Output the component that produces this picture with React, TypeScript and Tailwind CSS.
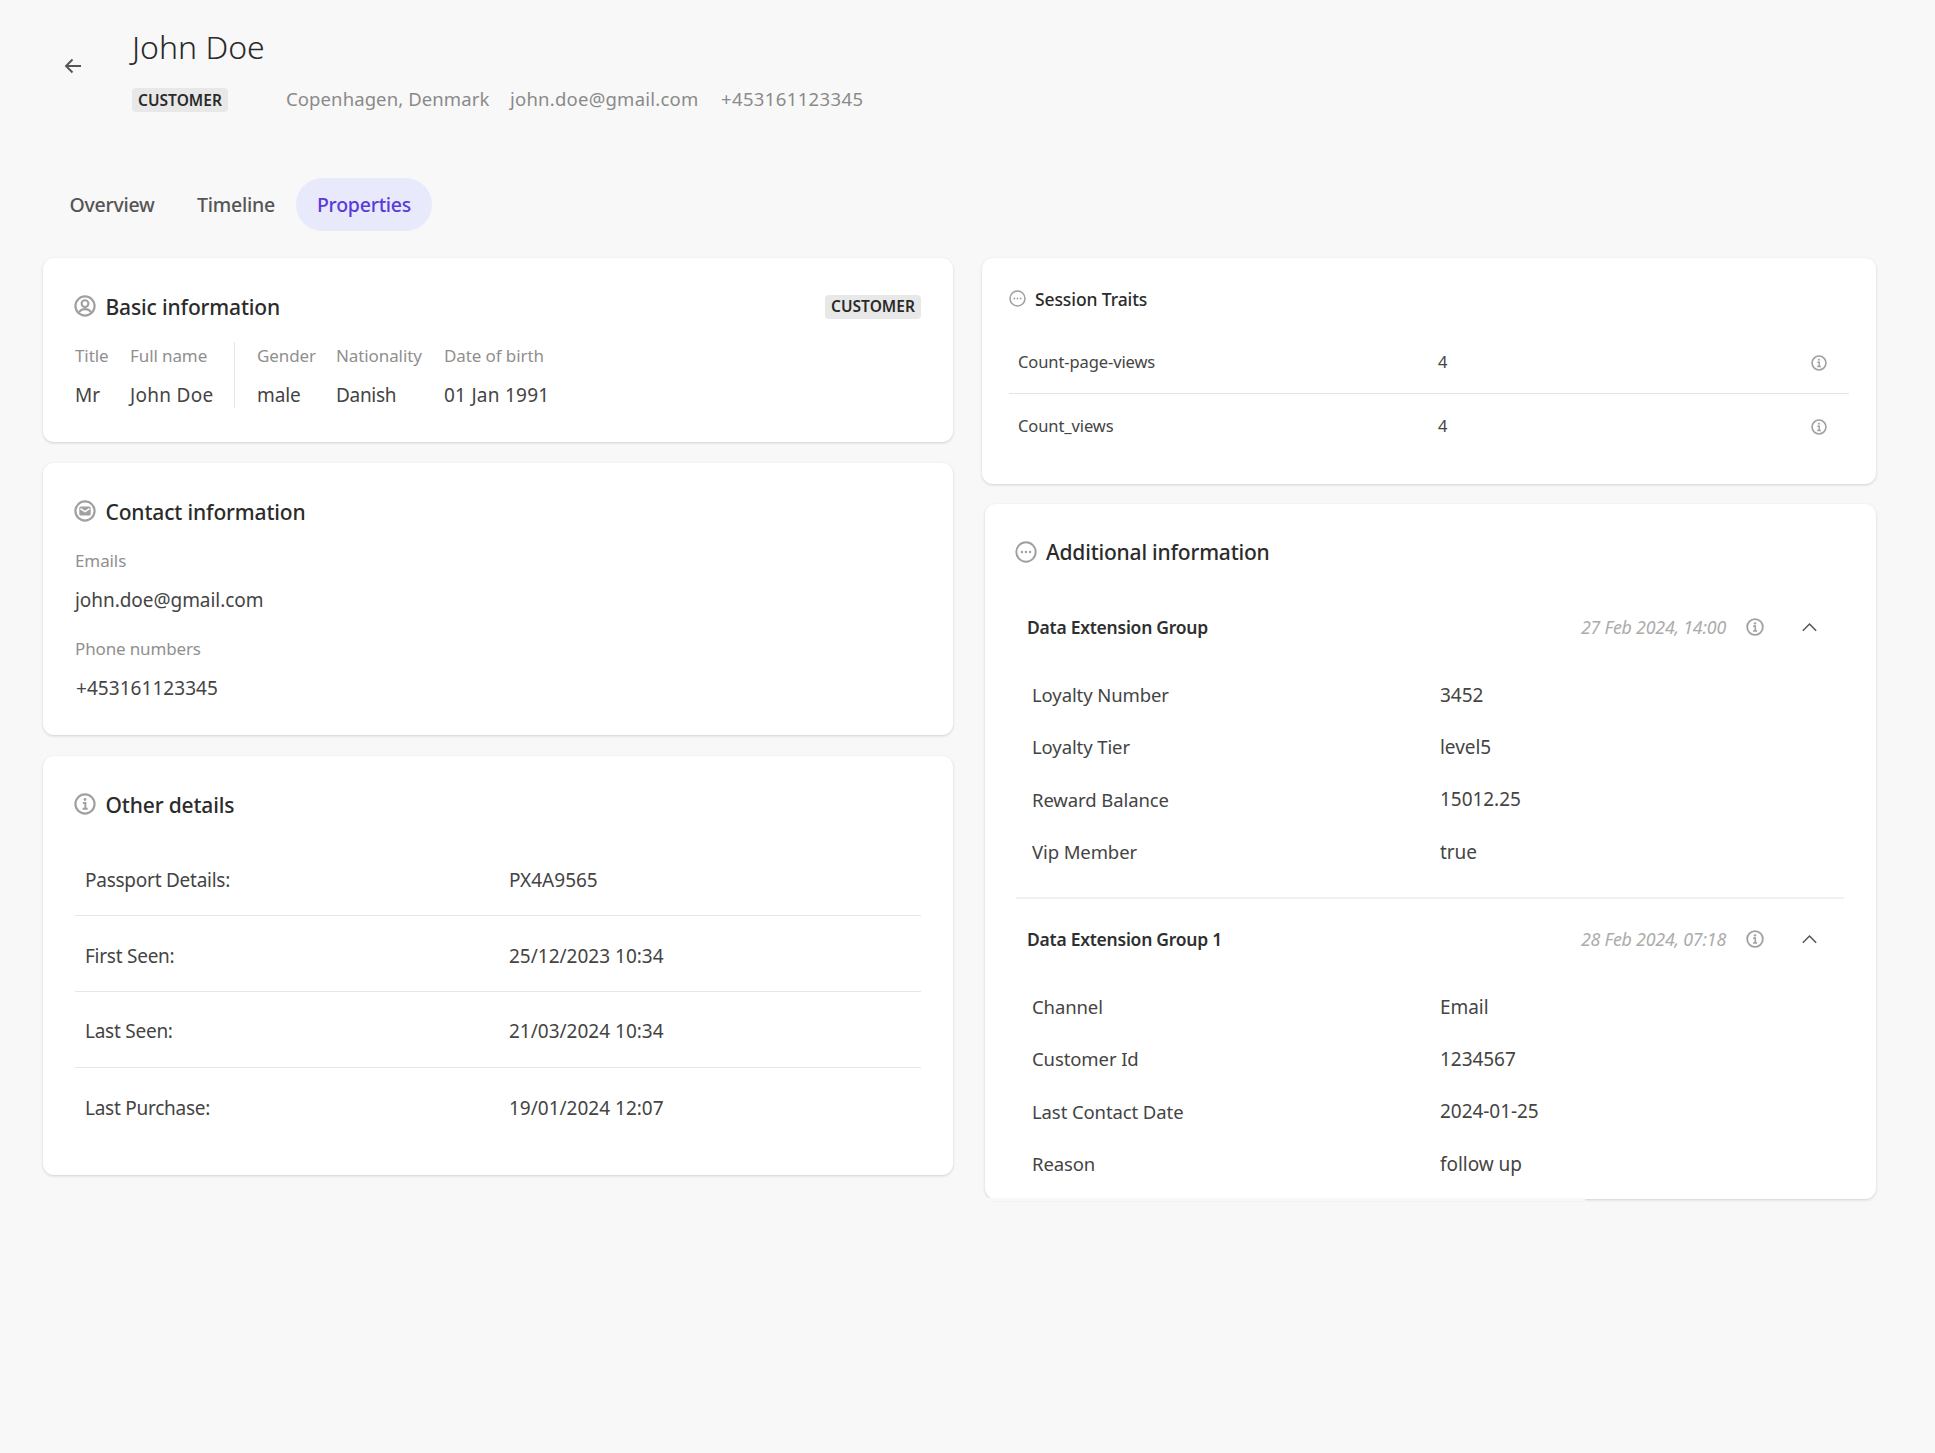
import React from "react";

const Stroke = "#a0a0a0";

function InfoIcon({ className }: { className: string }) {
  return (
    <svg viewBox="0 0 20 20" fill="none" className={className} stroke={Stroke}>
      <circle cx="10" cy="10" r="8.7" strokeWidth="2" />
      <circle cx="10" cy="5.900" r="1.300" fill={Stroke} stroke="none" />
      <path d="M8 9h2.300v5.200M7.800 14.400h4.600" strokeWidth="1.800" />
    </svg>
  );
}
function DotsIcon({ className }: { className: string }) {
  return (
    <svg viewBox="0 0 20 20" fill="none" className={className} stroke={Stroke}>
      <circle cx="10" cy="10" r="8.800" strokeWidth="1.800" />
      <circle cx="6.300" cy="10" r="1.100" fill={Stroke} stroke="none" />
      <circle cx="10" cy="10" r="1.100" fill={Stroke} stroke="none" />
      <circle cx="13.700" cy="10" r="1.100" fill={Stroke} stroke="none" />
    </svg>
  );
}
function UserIcon({ className }: { className: string }) {
  return (
    <svg viewBox="0 0 20 20" fill="none" className={className} stroke={Stroke}>
      <circle cx="10" cy="10" r="8.700" strokeWidth="2" />
      <circle cx="10" cy="7.800" r="3.100" strokeWidth="1.900" />
      <path d="M4.600 15.800c1-2.100 3.100-3 5.400-3s4.400.9 5.400 3" strokeWidth="1.900" />
    </svg>
  );
}
function MailIcon({ className }: { className: string }) {
  return (
    <svg viewBox="0 0 20 20" fill="none" className={className}>
      <circle cx="10" cy="10" r="8.700" stroke={Stroke} strokeWidth="2" />
      <rect x="4.800" y="5.800" width="10.400" height="8.400" rx="1.400" fill={Stroke} />
      <path d="M5.800 7.800 10 10.600l4.200-2.800" stroke="#fff" strokeWidth="1.300" />
    </svg>
  );
}
function Chevron() {
  return (
    <svg viewBox="0 0 20 12" fill="none" className="w-[17px] h-[10px]" stroke="#555" strokeWidth="1.800">
      <path d="M2 10.500 10 2.500l8 8" />
    </svg>
  );
}
function Chip() {
  return (
    <span className="inline-flex items-center justify-center w-[96px] h-[24px] pt-[1px] rounded-[4px] bg-[#e8e8e8] text-[15.500px] font-semibold text-[#2a2a2a] tracking-[0.020px]">
      CUSTOMER
    </span>
  );
}
function Card({ className, children }: { className: string; children: React.ReactNode }) {
  return (
    <section className={`bg-white rounded-[11px] shadow-[0_1px_3px_rgba(0,0,0,0.16)] ${className}`}>{children}</section>
  );
}
function Heading({ icon, children }: { icon: React.ReactNode; children: React.ReactNode }) {
  return (
    <div className="flex items-center h-[28px]">
      <span className="w-[31px] flex -mt-[4px] -ml-[1px] mr-[0.500px]">{icon}</span>
      <h2 className="text-[21px] font-medium text-[#2b2b2b] tracking-[-0.150px]">{children}</h2>
    </div>
  );
}

const basic = [
  { l: "Title", v: "Mr", w: "w-[55px]", t: "tracking-[0.050px]" },
  { l: "Full name", v: "John Doe", w: "w-[104px]", t: "tracking-[0.300px]" },
  { l: "Gender", v: "male", w: "w-[102px]", t: "tracking-[-0.100px]" },
  { l: "Nationality", v: "Danish", w: "w-[108px]", t: "tracking-[-0.300px]" },
  { l: "Date of birth", v: "01 Jan 1991", w: "w-[140px]", t: "tracking-[0.250px]" },
];
const other = [
  ["Passport Details:", "PX4A9565"],
  ["First Seen:", "25/12/2023 10:34"],
  ["Last Seen:", "21/03/2024 10:34"],
  ["Last Purchase:", "19/01/2024 12:07"],
];
const groups = [
  {
    name: "Data Extension Group",
    date: "27 Feb 2024, 14:00",
    rows: [
      ["Loyalty Number", "3452"],
      ["Loyalty Tier", "level5"],
      ["Reward Balance", "15012.25"],
      ["Vip Member", "true"],
    ],
  },
  {
    name: "Data Extension Group 1",
    date: "28 Feb 2024, 07:18",
    rows: [
      ["Channel", "Email"],
      ["Customer Id", "1234567"],
      ["Last Contact Date", "2024-01-25"],
      ["Reason", "follow up"],
    ],
  },
];

export default function App() {
  return (
    <div className="relative min-h-[1453px] bg-[#f8f8f8] text-[#444] font-['Noto_Sans','Open_Sans',sans-serif]">
      <header className="flex pl-[64px] pt-[30px] h-[178px]">
        <div className="w-[68px] pt-[28px]">
          <svg viewBox="0 0 18 16" fill="none" stroke="#555" strokeWidth="1.900" className="w-[18px] h-[16px]">
            <path d="M17 8H2M8.500 1.500 2 8l6.500 6.500" />
          </svg>
        </div>
        <div>
          <h1 className="text-[32px] leading-[34px] font-light text-[#2a2a2a]">John Doe</h1>
          <div className="flex items-center mt-[24px] h-[24px] text-[#8a8a8a] text-[18.500px]">
            <Chip />
            <span className="ml-[58px] w-[224px] pb-[2px] tracking-[0.100px]">Copenhagen, Denmark</span>
            <span className="w-[211px] pb-[2px] tracking-[0.230px]">john.doe@gmail.com</span>
            <span className="pb-[2px] tracking-[0.370px]">+453161123345</span>
          </div>
        </div>
      </header>

      <nav className="flex ml-[48px] h-[53px] text-[19.500px] font-medium text-[#555] tracking-[-0.250px]">
        <div className="w-[128px] flex items-center justify-center">Overview</div>
        <div className="w-[120px] flex items-center justify-center">Timeline</div>
        <div className="w-[136px] flex items-center justify-center rounded-[27px] bg-[#e9e9fc] text-[#5a3bd8]">Properties</div>
      </nav>

      <main className="flex items-start mt-[27px] pl-[43px]">
        <div className="w-[910px] flex flex-col gap-[21px]">
          <Card className="h-[184px] px-[32px] pt-[36px]">
            <div className="flex items-center justify-between">
              <Heading icon={<UserIcon className="w-[22px] h-[22px]" />}>Basic information</Heading>
              <span className="-mt-[3px]"><Chip /></span>
            </div>
            <div className="flex mt-[20px]">
              {basic.map((b, i) => (
                <div key={b.l} className={`${b.w} ${i === 2 ? "pl-[22px] border-l border-[#e4e4e4]" : ""}`}>
                  <div className="h-[28px] flex items-center text-[17px] text-[#8f8f8f] tracking-[-0.100px] whitespace-nowrap">{b.l}</div>
                  <div className={`h-[28px] mt-[10px] pt-[3px] flex items-center text-[19px] text-[#444] whitespace-nowrap ${b.t}`}>{b.v}</div>
                </div>
              ))}
            </div>
          </Card>

          <Card className="h-[272px] px-[32px] pt-[36px]">
            <Heading icon={<MailIcon className="w-[22px] h-[22px]" />}>Contact information</Heading>
            <div className="mt-[20px] h-[28px] flex items-center text-[17px] text-[#8f8f8f] tracking-[-0.100px]">Emails</div>
            <div className="mt-[11px] h-[28px] flex items-center text-[19px] tracking-[-0.050px]">john.doe@gmail.com</div>
            <div className="mt-[21px] h-[28px] flex items-center text-[17px] text-[#8f8f8f] tracking-[-0.150px]">Phone numbers</div>
            <div className="mt-[11px] h-[28px] pl-[1px] flex items-center text-[19px] tracking-[0.050px]">+453161123345</div>
          </Card>

          <Card className="h-[419px] px-[32px] pt-[36px]">
            <Heading icon={<InfoIcon className="w-[22px] h-[22px]" />}>Other details</Heading>
            <div className="mt-[20.500px]">
              {other.map((r, i) => (
                <div key={r[0]} className={`flex items-center h-[75.700px] pl-[10px] pt-[5px] text-[19px] ${i < 3 ? "border-b border-[#e6e6e6]" : ""}`}>
                  <span className="w-[424px] tracking-[-0.250px]">{r[0]}</span>
                  <span className="tracking-[0px]">{r[1]}</span>
                </div>
              ))}
            </div>
          </Card>
        </div>

        <div className="w-[894px] ml-[29px] flex flex-col gap-[20px]">
          <Card className="h-[226px] pl-[27px] pr-[27px] pt-[27px]">
            <div className="flex items-center h-[28px]">
              <DotsIcon className="w-[17px] h-[17px] mr-[9px] -mt-[1px]" />
              <h2 className="text-[17.500px] font-medium text-[#2b2b2b] tracking-[-0.100px]">Session Traits</h2>
            </div>
            <div className="mt-[18px]">
              {[["Count-page-views", "4"], ["Count_views", "4"]].map((r, i) => (
                <div key={r[0]} className={`flex items-center pl-[9px] text-[16.500px] tracking-[-0.100px] ${i === 0 ? "h-[63px] border-b border-[#e4e4e4]" : "h-[64px]"}`}>
                  <span className="w-[420px]">{r[0]}</span>
                  <span className="flex-1">{r[1]}</span>
                  <InfoIcon className="w-[16px] h-[16px] mr-[22px] mt-[1px]" />
                </div>
              ))}
            </div>
          </Card>

          <Card className="relative ml-[3px] w-[891px] h-[695px] px-[31px] pt-[35px]">
            <div className="flex items-center h-[28px]">
              <DotsIcon className="w-[22px] h-[22px] -ml-[1px] mr-[9px] -mt-[3px]" />
              <h2 className="text-[21px] font-medium text-[#2b2b2b] tracking-[-0.200px]">Additional information</h2>
            </div>
            <div className="mt-[47px] w-[828px]">
              {groups.map((g, i) => (
                <div key={g.name} className={i === 0 ? "border-b-2 border-[#f1f1f1] h-[285px]" : ""}>
                  <div className={`flex items-center h-[28px] pl-[11px] ${i === 1 ? "mt-[27px]" : ""}`}>
                    <span className="flex-1 pb-[2px] text-[17.500px] font-semibold text-[#2f2f2f] tracking-[-0.250px]">{g.name}</span>
                    <span className="w-[165px] pb-[2px] text-[17.800px] italic text-[#ababab] tracking-[-0.200px]">{g.date}</span>
                    <InfoIcon className="w-[18px] h-[18px] -mt-[2px]" />
                    <span className="ml-[37px] mr-[26px] -mt-[2px] flex"><Chevron /></span>
                  </div>
                  <div className="mt-[39px]">
                    {g.rows.map((r) => (
                      <div key={r[0]} className="flex items-center h-[28px] mb-[24.300px] pl-[16px] text-[18.500px] tracking-[-0.100px]">
                        <span className="w-[408px]">{r[0]}</span>
                        <span className="text-[19px] tracking-[-0.050px]">{r[1]}</span>
                      </div>
                    ))}
                  </div>
                </div>
              ))}
            </div>
            <div className="absolute left-0 bottom-[-2px] w-[600px] h-[3px] bg-[#f8f8f8]" />
          </Card>
        </div>
      </main>
    </div>
  );
}
